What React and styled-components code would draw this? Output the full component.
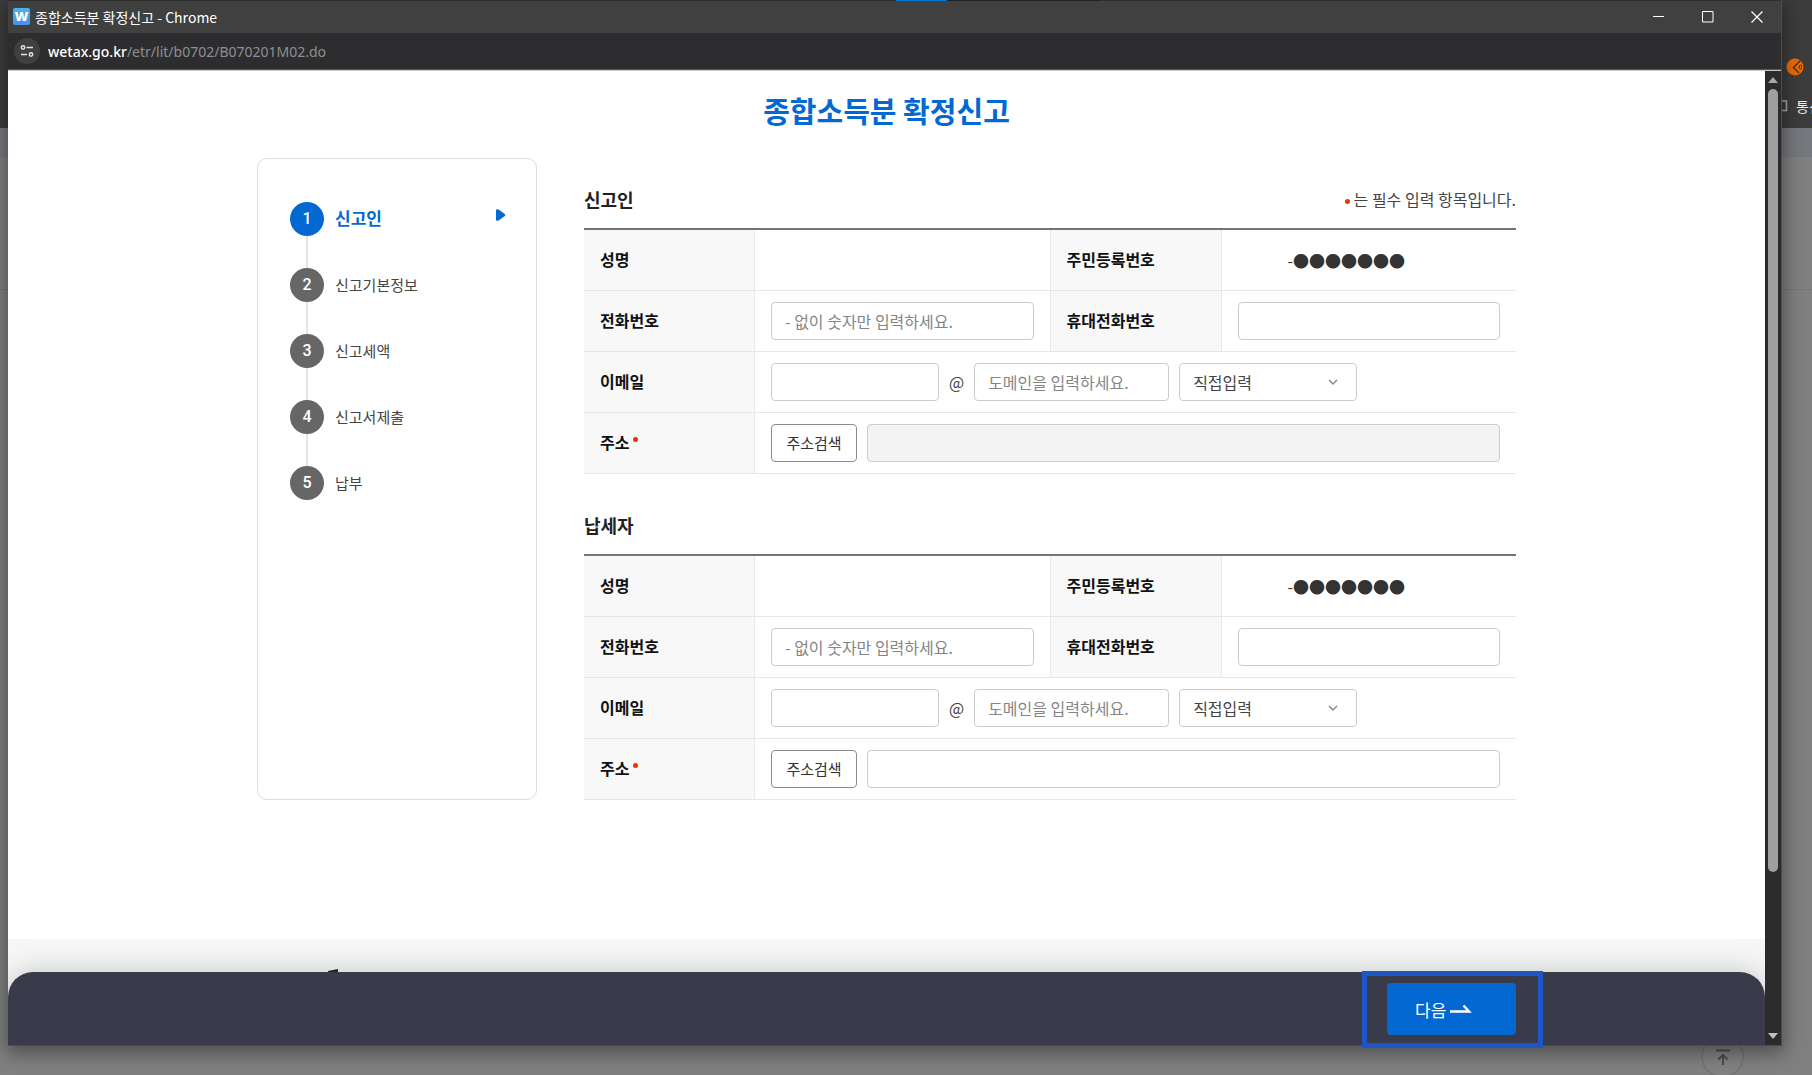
import React from "react";
import styled, { createGlobalStyle, css } from "styled-components";

const GlobalStyle = createGlobalStyle`
    * {
        box-sizing: border-box;
    }
    body {
        margin: 0;
        overflow: hidden;
        font-family: "Noto Sans CJK KR", "Noto Sans", sans-serif;
        font-size: 16px;
        color: #444;
    }
    button, input, select {
        font-family: inherit;
        font-size: 16px;
    }
    h1, h2, ol, p {
        margin: 0;
        padding: 0;
    }
`;

/* 뒤쪽 브라우저 */
const Desktop = styled.div`
    position: relative;
    display: flex;
    flex-direction: column;
    height: 100vh;
    overflow: hidden;
    background-color: #808080;
`;

const BackChrome = styled.div`
    display: flex;
    flex-direction: column;
    align-items: flex-end;
    height: 128px;
    padding-top: 58px;
    gap: 19px;
    background-color: #3c3c3c;
    color: #eee;
`;

const BackExtension = styled.svg`
    flex: none;
    width: 18px;
    height: 18px;
    margin-right: 8px;
`;

const BackBookmark = styled.div`
    display: flex;
    align-items: center;
    gap: 8px;
    width: 34px;
    overflow: hidden;
    white-space: nowrap;
    font-size: 14px;
    line-height: 22px;
`;

const BookmarkIcon = styled.svg`
    flex: none;
    width: 10px;
    height: 12px;
`;

const BackHeader = styled.div`
    height: 29px;
    background-color: #77787d;
`;

const BackBody = styled.div`
    height: 133px;
    border-bottom: 1px solid #757676;
`;

const TopButton = styled.button`
    position: absolute;
    right: 68px;
    bottom: -3px;
    display: flex;
    justify-content: center;
    width: 43px;
    height: 43px;
    padding: 12px 0 0;
    border: 2px solid #767676;
    border-radius: 50%;
    background-color: #828282;
`;

/* 팝업 창 */
const Popup = styled.div`
    position: absolute;
    inset: 0 30px 29px 8px;
    display: flex;
    flex-direction: column;
    border: solid #4c4c4c;
    border-width: 0 1px 1px 0;
    box-shadow: 0 5px 18px 2px rgba(0, 0, 0, 0.4);
`;

const TaskStrip = styled.div`
    display: flex;
    justify-content: center;
    height: 1px;
    background-color: #2c2c2c;
    &::before {
        content: "";
        width: 51px;
        margin-left: 206px;
        background-color: #0078d7;
    }
    &::after {
        content: "";
        width: 152px;
        background-color: #202020;
    }
`;

const TitleBar = styled.div`
    display: flex;
    align-items: center;
    height: 32px;
    padding-left: 5px;
    gap: 5px;
    background-color: #404040;
    color: #fff;
    font-size: 14px;
`;

const Favicon = styled.span`
    width: 17px;
    height: 17px;
    margin-bottom: 2px;
    border-radius: 2px;
    background: linear-gradient(#4fb0e8, #4a8fe8);
    font-family: "Open Sans", sans-serif;
    font-size: 13px;
    font-weight: 800;
    line-height: 16px;
    text-align: center;
`;

const WindowButtons = styled.div`
    display: flex;
    margin-left: auto;
`;

const WindowButton = styled.button`
    display: flex;
    align-items: center;
    justify-content: center;
    width: 49px;
    height: 32px;
    padding: 0;
    border: none;
    background: none;
    color: #fff;
`;

const AddressBar = styled.div`
    display: flex;
    align-items: center;
    height: 37px;
    padding-left: 6px;
    gap: 8px;
    border-bottom: 1px solid #5a5a5a;
    background-color: #2d2d2f;
    color: #8e8f91;
    font-family: "Noto Sans", sans-serif;
    font-size: 14px;
    b {
        color: #fff;
        font-weight: 500;
    }
`;

const SiteInfo = styled.button`
    display: flex;
    align-items: center;
    justify-content: center;
    width: 26px;
    height: 26px;
    padding: 0;
    border: none;
    border-radius: 50%;
    background-color: #404040;
`;

const Viewport = styled.div`
    display: flex;
    flex: 1;
    min-height: 0;
    border-top: 1px solid #c8c8c8;
`;

const Page = styled.div`
    position: relative;
    flex: 1;
    background-color: #fff;
`;

const PageScroll = styled.div`
    position: relative;
    height: 100%;
    overflow: hidden;
`;

const ScrollBar = styled.div`
    display: flex;
    flex-direction: column;
    align-items: center;
    width: 16px;
    padding: 6px 0;
    gap: 6px;
    background-color: #2b2b2b;
`;

const ScrollTrack = styled.div`
    flex: 1;
    width: 10px;
`;

const ScrollThumb = styled.div`
    height: 83.5%;
    border-radius: 5px;
    background-color: #9f9f9f;
`;

const PageTitle = styled.h1`
    padding-top: 18px;
    color: #0468d2;
    font-size: 29px;
    font-weight: 700;
    line-height: 43px;
    text-align: center;
`;

const Content = styled.main`
    display: flex;
    gap: 47px;
    max-width: 1259px;
    margin: 26px auto 139px;
`;

const Side = styled.nav`
    flex: none;
    width: 280px;
    padding: 43px 30px 43px 32px;
    border: 1px solid #ddd;
    border-radius: 10px;
`;

const StepList = styled.ol`
    display: flex;
    flex-direction: column;
    gap: 32px;
    list-style: none;
`;

const Step = styled.li`
    position: relative;
    display: flex;
    align-items: center;
    height: 34px;
    gap: 11px;
    color: #444;
    font-size: 15px;
    &:not(:last-child)::after {
        content: "";
        position: absolute;
        top: 34px;
        left: 16px;
        width: 2px;
        height: 32px;
        background-color: #e4e4e4;
    }
    ${(props) => props.$active && css`
        color: #0468d2;
        font-size: 17px;
        font-weight: 700;
    `}
`;

const StepLabel = styled.span`
    padding-bottom: ${(props) => (props.$active ? "4px" : "2px")};
`;

const StepNumber = styled.span`
    width: 34px;
    height: 34px;
    border-radius: 50%;
    background-color: ${(props) => (props.$active ? "#0468d2" : "#666")};
    color: #fff;
    font-family: Roboto, sans-serif;
    font-size: 16px;
    font-weight: 500;
    line-height: 34px;
    text-align: center;
`;

const StepArrow = styled.svg`
    width: 10px;
    height: 12px;
    margin: 0 0 8px auto;
`;

const Forms = styled.div`
    display: flex;
    flex: 1;
    flex-direction: column;
    min-width: 0;
    padding-top: 14px;
    gap: 24px;
`;

const SectionHead = styled.div`
    display: flex;
    align-items: center;
    justify-content: space-between;
    height: 56px;
    padding-bottom: 3px;
    h2 {
        color: #222;
        font-size: 18px;
        font-weight: 700;
    }
`;

const Required = styled.i`
    display: inline-block;
    width: 5px;
    height: 5px;
    margin: 0 4px;
    border-radius: 50%;
    background-color: #eb3300;
    vertical-align: ${(props) => (props.$top ? "7px" : "2px")};
`;

const FormTable = styled.table`
    width: 100%;
    border-top: 2px solid #72737f;
    border-spacing: 0;
    table-layout: fixed;
    th, td {
        height: 61px;
        padding: 0 16px;
        border-bottom: 1px solid #e6e6e6;
        text-align: left;
    }
    th {
        padding-bottom: 2px;
        border-right: 1px solid #e9e9e9;
        background-color: #f8f8f8;
        color: #111;
        font-weight: 700;
    }
    td + th {
        border-left: 1px solid #e9e9e9;
    }
`;

const Field = styled.div`
    display: flex;
    align-items: center;
    gap: 10px;
`;

const boxStyle = css`
    height: 38px;
    border: 1px solid #ccc;
    border-radius: 4px;
    background-color: #fff;
    color: #444;
`;

const TextInput = styled.input`
    ${boxStyle}
    flex: ${(props) => (props.$width ? "none" : 1)};
    width: ${(props) => props.$width || "100%"};
    min-width: 0;
    padding: 0 13px;
    &::placeholder {
        color: #858585;
    }
    &:read-only {
        background-color: #f3f3f3;
    }
`;

const SelectWrap = styled.div`
    position: relative;
    width: 178px;
    svg {
        position: absolute;
        top: 16px;
        right: 19px;
        pointer-events: none;
    }
`;

const Select = styled.select`
    ${boxStyle}
    width: 100%;
    padding: 0 13px;
    appearance: none;
`;

const SearchButton = styled.button`
    ${boxStyle}
    flex: none;
    width: 86px;
    padding: 0 0 2px;
    border-color: #8c8c8c;
    color: #333;
    font-size: 15px;
`;

const Masked = styled.span`
    padding-left: 50px;
    color: #333;
`;

const Footer = styled.footer`
    height: 200px;
    padding: 30px 0 0 320px;
    background-color: #f7f7f7;
    svg {
        display: block;
    }
`;

/* 하단 고정 버튼 영역 */
const BottomShade = styled.div`
    position: absolute;
    right: 0;
    bottom: 0;
    left: 0;
    height: 73px;
    border-radius: 25px 25px 0 0;
    box-shadow: 0 0 30px rgba(40, 60, 50, 0.25);
`;

const BottomBar = styled.div`
    position: absolute;
    right: 0;
    bottom: 0;
    left: 0;
    height: 73px;
    padding: 11px 0;
    border-radius: 25px 25px 0 0;
    background-color: #3a3b4a;
`;

const BottomInner = styled.div`
    display: flex;
    justify-content: flex-end;
    max-width: 1259px;
    margin: 0 auto;
`;

const NextButton = styled.button`
    display: flex;
    align-items: center;
    justify-content: flex-start;
    width: 129px;
    height: 52px;
    padding: 0 28px;
    gap: 4px;
    border: none;
    border-radius: 4px;
    background-color: #0468d2;
    color: #fff;
    font-size: 17px;
    white-space: nowrap;
    svg {
        flex: none;
    }
`;

const NextWrap = styled.div`
    position: relative;
    &::after {
        content: "";
        position: absolute;
        inset: -12px -27px -13px -25px;
        border: 5px solid #1e56c8;
        pointer-events: none;
    }
`;

const steps = ["신고인", "신고기본정보", "신고세액", "신고서제출", "납부"];

const PersonForm = (props) => {
    const id = props.id;
    const title = props.title;
    const readOnly = props.readOnly;

    return (
        <section>
            <SectionHead>
                <h2>{title}</h2>
                {props.notice && <p><Required />는 필수 입력 항목입니다.</p>}
            </SectionHead>
            <FormTable>
                <colgroup>
                    <col style={{ width: 171 }} />
                    <col />
                    <col style={{ width: 172 }} />
                    <col />
                </colgroup>
                <tbody>
                    <tr>
                        <th scope="row">성명</th>
                        <td></td>
                        <th scope="row">주민등록번호</th>
                        <td><Masked>-●●●●●●●</Masked></td>
                    </tr>
                    <tr>
                        <th scope="row"><label htmlFor={id + "Tel"}>전화번호</label></th>
                        <td><Field><TextInput id={id + "Tel"} placeholder="- 없이 숫자만 입력하세요." /></Field></td>
                        <th scope="row"><label htmlFor={id + "Mobile"}>휴대전화번호</label></th>
                        <td><Field><TextInput id={id + "Mobile"} /></Field></td>
                    </tr>
                    <tr>
                        <th scope="row"><label htmlFor={id + "Email"}>이메일</label></th>
                        <td colSpan={3}>
                            <Field>
                                <TextInput id={id + "Email"} $width="168px" />
                                <span>@</span>
                                <TextInput $width="195px" aria-label="도메인" placeholder="도메인을 입력하세요." />
                                <SelectWrap>
                                    <Select aria-label="도메인 선택">
                                        <option>직접입력</option>
                                    </Select>
                                    <svg width="10" height="7" viewBox="0 0 10 7" fill="none" stroke="#888" strokeWidth="1.5">
                                        <path d="M1 1l4 4 4-4" />
                                    </svg>
                                </SelectWrap>
                            </Field>
                        </td>
                    </tr>
                    <tr>
                        <th scope="row"><label htmlFor={id + "Addr"}>주소<Required $top /></label></th>
                        <td colSpan={3}>
                            <Field>
                                <SearchButton type="button">주소검색</SearchButton>
                                <TextInput id={id + "Addr"} readOnly={readOnly} />
                            </Field>
                        </td>
                    </tr>
                </tbody>
            </FormTable>
        </section>
    );
};

const App = () => {
    return (
        <Desktop>
            <GlobalStyle />
            <BackChrome>
                <BackExtension viewBox="0 0 18 18">
                    <circle cx="9" cy="9" r="8.5" fill="#f06a00" />
                    <path d="M14.500 2.500L7.500 9.500l5.500 5.500" fill="none" stroke="#3c3c3c" strokeWidth="1.6" />
                    <ellipse cx="14.500" cy="9" rx="1.200" ry="2.200" fill="none" stroke="#3c3c3c" />
                </BackExtension>
                <BackBookmark>
                    <BookmarkIcon viewBox="0 0 10 12" fill="none" stroke="#aaa" strokeWidth="1.5">
                        <path d="M2 1h6.500v9.500H2" />
                    </BookmarkIcon>
                    통신
                </BackBookmark>
            </BackChrome>
            <BackHeader />
            <BackBody />
            <TopButton aria-label="맨 위로">
                <svg width="14" height="16" viewBox="0 0 14 16" fill="none" stroke="#4b4b52" strokeWidth="2">
                    <path d="M0 1.500h14M7 16V7M2.500 10.500L7 6l4.500 4.500" />
                </svg>
            </TopButton>

            <Popup>
                <TaskStrip />
                <TitleBar>
                    <Favicon>W</Favicon>
                    <span>종합소득분 확정신고 - Chrome</span>
                    <WindowButtons>
                        <WindowButton aria-label="최소화">
                            <svg width="12" height="12" stroke="currentColor"><path d="M0 5.500h11" /></svg>
                        </WindowButton>
                        <WindowButton aria-label="최대화">
                            <svg width="12" height="12" fill="none" stroke="currentColor"><path d="M.5.5h10.500v10.500H.5z" /></svg>
                        </WindowButton>
                        <WindowButton aria-label="닫기">
                            <svg width="12" height="12" stroke="currentColor" strokeWidth="1.200"><path d="M.5.5l11 11M11.500.5l-11 11" /></svg>
                        </WindowButton>
                    </WindowButtons>
                </TitleBar>
                <AddressBar>
                    <SiteInfo aria-label="사이트 정보">
                        <svg width="14" height="14" viewBox="0 0 14 14" fill="none" stroke="#e3e3e3" strokeWidth="1.500">
                            <circle cx="3" cy="3.500" r="1.700" />
                            <path d="M6.500 3.500H13M1 10.500h6" />
                            <circle cx="11" cy="10.500" r="1.700" />
                        </svg>
                    </SiteInfo>
                    <span><b>wetax.go.kr</b>/etr/lit/b0702/B070201M02.do</span>
                </AddressBar>
                <Viewport>
                    <Page>
                        <PageScroll>
                            <PageTitle>종합소득분 확정신고</PageTitle>
                            <Content>
                                <Side>
                                    <StepList>
                                        {steps.map((step, index) => (
                                            <Step key={step} $active={index === 0}>
                                                <StepNumber $active={index === 0}>{index + 1}</StepNumber>
                                                <StepLabel $active={index === 0}>{step}</StepLabel>
                                                {index === 0 && (
                                                    <StepArrow viewBox="0 0 10 12" fill="#0468d2">
                                                        <path d="M0 1.500Q0 0 1.500.3L3 .8l5.800 4.300q1 .9 0 1.800L3 11.200l-1.500.5Q0 12 0 10.500z" />
                                                    </StepArrow>
                                                )}
                                            </Step>
                                        ))}
                                    </StepList>
                                </Side>
                                <Forms>
                                    <PersonForm id="reporter" title="신고인" notice readOnly />
                                    <PersonForm id="taxpayer" title="납세자" />
                                </Forms>
                            </Content>
                            <Footer>
                                <svg width="10" height="6"><path d="M0 2L10 0v6H0z" fill="#222" /></svg>
                            </Footer>
                            <BottomShade />
                        </PageScroll>
                        <BottomBar>
                            <BottomInner>
                                <NextWrap>
                                    <NextButton type="button">
                                        다음
                                        <svg width="22" height="10" viewBox="0 0 22 10" fill="none" stroke="#fff" strokeWidth="2.500">
                                            <path d="M0 7.500h19L13.500 1.500" />
                                        </svg>
                                    </NextButton>
                                </NextWrap>
                            </BottomInner>
                        </BottomBar>
                    </Page>
                    <ScrollBar>
                        <svg width="10" height="6" fill="#a8a8a8"><path d="M5 0l5 6H0z" /></svg>
                        <ScrollTrack>
                            <ScrollThumb />
                        </ScrollTrack>
                        <svg width="10" height="6" fill="#c0c0c0"><path d="M5 6l5-6H0z" /></svg>
                    </ScrollBar>
                </Viewport>
            </Popup>
        </Desktop>
    );
};

export default App;
